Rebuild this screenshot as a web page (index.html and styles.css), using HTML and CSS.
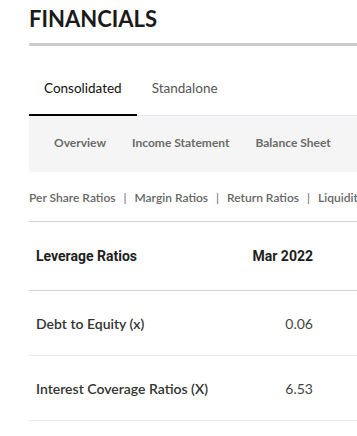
FILE: index.html
```html
<!DOCTYPE html>
<html lang="en">
<head>
    <meta charset="UTF-8">
    <title>Financials</title>
    <link rel="stylesheet" href="styles.css">
</head>
<body>
    <div class="wrap">
        <h1 class="title">FINANCIALS</h1>

        <ul class="tabs">
            <li class="tab active">Consolidated</li>
            <li class="tab">Standalone</li>
        </ul>

        <ul class="subnav">
            <li>Overview</li>
            <li>Income Statement</li>
            <li>Balance Sheet</li>
        </ul>

        <div class="ratios">
            <span>Per Share Ratios</span><i>|</i><span>Margin Ratios</span><i>|</i><span>Return Ratios</span><i>|</i><span>Liquidity Ratios</span>
        </div>

        <div class="grid">
            <div class="row head">
                <div class="label">Leverage Ratios</div>
                <div class="val">Mar 2022</div>
            </div>
            <div class="row">
                <div class="label">Debt to Equity (x)</div>
                <div class="val">0.06</div>
            </div>
            <div class="row">
                <div class="label">Interest Coverage Ratios (X)</div>
                <div class="val">6.53</div>
            </div>
        </div>
    </div>
</body>
</html>
```

FILE: styles.css
```css
*{
    margin: 0;
    padding: 0;
    box-sizing: border-box;
}
body{
    font-family: Lato, "Liberation Sans", sans-serif;
    color: #222;
    background: #fff;
    overflow: hidden;
}
.wrap{
    padding: 6px 0 0 29px;
}
.title{
    font-size: 22px;
    line-height: 26px;
    font-weight: 700;
    color: #1a1a1a;
    padding-bottom: 11px;
    border-bottom: 3px solid #cccccc;
}
.tabs{
    list-style: none;
    display: flex;
    margin-top: 22px;
    border-bottom: 1px solid #e6e6ef;
    white-space: nowrap;
}
.tab{
    font-size: 13.5px;
    line-height: 20px;
    padding: 10px 15px 16px;
    color: #555;
    border-bottom: 2px solid transparent;
    margin-bottom: -1px;
}
.tab.active{
    color: #111;
    border-bottom-color: #000;
}
.subnav{
    list-style: none;
    display: flex;
    gap: 26px;
    background: #f5f5f5;
    padding: 19px 25px 21px;
    font-size: 12px;
    line-height: 16px;
    font-weight: 700;
    color: #6b6b6b;
    white-space: nowrap;
    overflow: hidden;
}
.ratios{
    margin-top: 18px;
    margin-bottom: 15px;
    font-size: 12px;
    line-height: 16px;
    font-weight: 600;
    color: #666;
    white-space: nowrap;
    overflow: hidden;
}
.ratios i{
    font-style: normal;
    font-weight: 400;
    padding: 0 8px;
}
.grid{
    border-top: 1px solid #d6d6d6;
}
.row{
    display: flex;
    align-items: center;
    height: 65px;
    border-bottom: 1px solid #e9e9e9;
    font-size: 14px;
    color: #333;
}
.row.head{
    height: 69px;
    border-bottom-color: #d6d6d6;
    font-family: Roboto, "Liberation Sans", sans-serif;
    font-weight: 700;
    color: #1e1e1e;
}
.label{
    flex: 1;
    padding-left: 7px;
    font-weight: 600;
}
.head .label{
    font-weight: 700;
}
.val{
    width: 100px;
    margin-right: 44px;
    text-align: right;
    color: #444;
}
.head .val{
    color: #1e1e1e;
}
```
